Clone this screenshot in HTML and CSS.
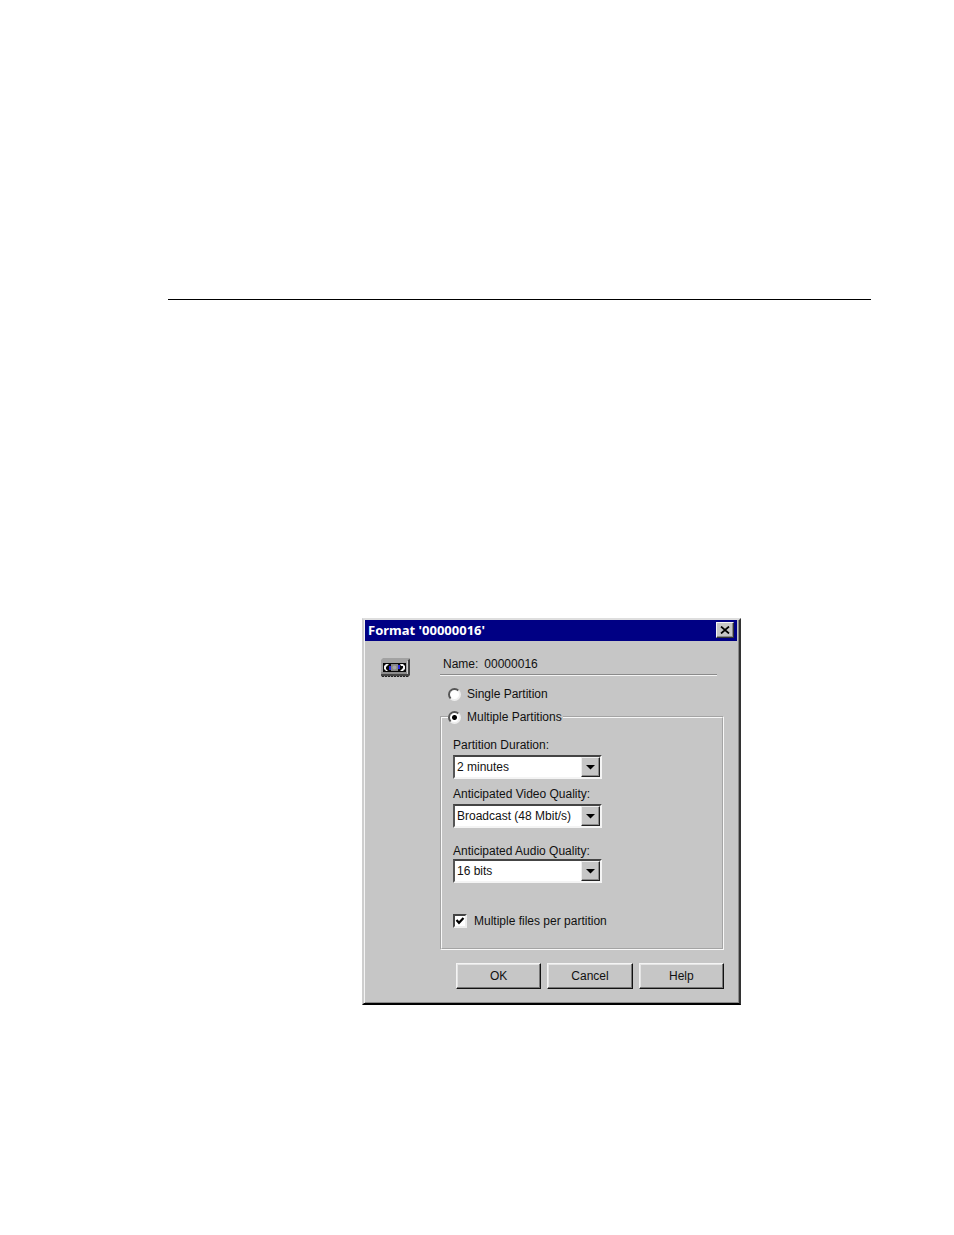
FILE: index.html
```html
<!DOCTYPE html>
<html lang="en">
<head>
<meta charset="utf-8">
<title>Format '00000016'</title>
<link rel="stylesheet" href="styles.css">
</head>
<body>
<main class="page">
  <hr class="page-rule">
  <form class="dialog" role="dialog" aria-labelledby="dialog-title">
    <header class="titlebar">
      <h1 class="title" id="dialog-title">Format '00000016'</h1>
      <button class="close" type="button" aria-label="Close">
        <svg width="10" height="8" viewBox="0 0 10 8" aria-hidden="true"><path d="M1 0.5L9 7.5M9 0.5L1 7.5" stroke="#000" stroke-width="1.7"/></svg>
      </button>
    </header>
    <div class="body">
      <svg class="cassette" width="30" height="20" viewBox="0 0 30 20" aria-hidden="true">
        <path d="M0 2L2 0H29V17L27 19H0Z" fill="#a2a2a2"/>
        <path d="M27 2L29 1V17L27 19Z" fill="#444"/>
        <path d="M26 3h1v14h-1z" fill="#ccc"/>
        <path d="M0 16h27v2H0z" fill="#444"/>
        <path d="M1 18.5h26" stroke="#222" stroke-dasharray="2 1"/>
        <path d="M0 14h26v2H0z" fill="#8c8c8c"/>
        <path d="M2 5h23v9H2z" fill="#080808"/>
        <path d="M5 6h3L5 9v2l2 2H5L3 11V8zM22 6h-3l1 2h2v2l-3 3h3l2-2V8z" fill="#f4f4f4"/>
        <path d="M8 8h2v4H8zM17 7h2v4h-2z" fill="#2828e0"/>
        <path d="M10 6h7v7h-7z" fill="#858585"/>
        <circle cx="13.5" cy="9.5" r="2" fill="#a4a4a4"/>
      </svg>
      <div class="settings">
        <p class="name"><span>Name:</span><span>00000016</span></p>
        <label class="choice single"><input class="radio" type="radio" name="mode">Single Partition</label>
        <fieldset class="group">
          <legend class="legend"><label class="choice"><input class="radio" type="radio" name="mode" checked>Multiple Partitions</label></legend>
          <div class="field">
            <label for="duration">Partition Duration:</label>
            <span class="combo"><select id="duration"><option>2 minutes</option></select><svg class="arrow" viewBox="0 0 17 18" aria-hidden="true"><path d="M4 7h9L8.5 11.5z"/></svg></span>
          </div>
          <div class="field">
            <label for="video">Anticipated Video Quality:</label>
            <span class="combo"><select id="video"><option>Broadcast (48 Mbit/s)</option></select><svg class="arrow" viewBox="0 0 17 18" aria-hidden="true"><path d="M4 7h9L8.5 11.5z"/></svg></span>
          </div>
          <div class="field audio">
            <label for="audio">Anticipated Audio Quality:</label>
            <span class="combo"><select id="audio"><option>16 bits</option></select><svg class="arrow" viewBox="0 0 17 18" aria-hidden="true"><path d="M4 7h9L8.5 11.5z"/></svg></span>
          </div>
          <label class="check"><span class="checkwrap"><input type="checkbox" checked><svg class="tick" viewBox="0 0 10 10" aria-hidden="true"><path d="M1.5 4L4 6.8L8.5 2" fill="none" stroke="#000" stroke-width="2.2"/></svg></span>Multiple files per partition</label>
        </fieldset>
        <div class="actions">
          <button class="button" type="button">OK</button>
          <button class="button" type="button">Cancel</button>
          <button class="button" type="button">Help</button>
        </div>
      </div>
    </div>
  </form>
</main>
</body>
</html>
```
FILE: styles.css
```css
* { box-sizing: border-box; }

body {
  margin: 0;
  background: #fff;
  color: #111;
  font: 12px/16px "Liberation Sans", Arial, sans-serif;
}

button, select, input { font: inherit; color: inherit; margin: 0; }

.page { padding: 299px 83px 230px 168px; }

.page-rule {
  margin: 0 0 318px;
  border: 0;
  border-top: 1px solid #000;
}

.dialog {
  max-width: 379px;
  margin-left: 194px;
  background: #c6c6c6;
  border: 2px solid;
  border-color: #dedede #333 #000 #cecece;
  box-shadow: inset 1px 0 #f4f4f4, inset -1px -1px #8a8a8a;
}

.titlebar {
  display: flex;
  align-items: flex-start;
  justify-content: space-between;
  height: 21px;
  margin: 0 2px 0 1px;
  padding: 2px 3px 0;
  background: #000084;
}

.title {
  margin: 0;
  color: #fff;
  font: bold 13px/16px "Noto Sans", sans-serif;
}

.close {
  display: flex;
  align-items: center;
  justify-content: center;
  width: 18px;
  height: 16px;
  padding: 0;
  background: #c6c6c6;
  border: 1px solid;
  border-color: #f4f4f4 #333 #333 #f4f4f4;
  box-shadow: inset -1px -1px #8a8a8a;
}

.body {
  display: flex;
  align-items: flex-start;
  gap: 29px;
  padding: 15px 15px 14px 17px;
}

.cassette { flex: none; margin-top: 2px; }

.settings { flex: 1; min-width: 0; }

.name {
  display: flex;
  gap: 6px;
  margin: 0 7px 0 0;
  padding: 0 3px 2px;
  border-bottom: 1px solid #8a8a8a;
  box-shadow: 0 1px #f4f4f4;
}

.choice { display: flex; align-items: center; gap: 6px; }

.single { margin-top: 11px; padding-left: 8px; }

.radio {
  appearance: none;
  width: 13px;
  height: 13px;
  border: 2px solid;
  border-color: #555 #eee #eee #555;
  border-radius: 50%;
  background: #fff;
}

.radio:checked { background: radial-gradient(circle, #000 2px, #fff 3px); }

.group {
  min-width: 0;
  margin: 7px 0 0;
  padding: 12px 10px 19px 11px;
  border: 2px groove #f8f8f8;
}

.legend { margin-left: -5px; padding: 0 1px 0 0; }

.field { display: flex; flex-direction: column; width: 149px; margin-bottom: 7px; }

.field label { margin-bottom: 2px; white-space: nowrap; }

.audio { margin-top: 15px; }

.audio label { margin-bottom: 0; }

.combo { position: relative; display: block; }

.combo select {
  display: block;
  appearance: none;
  width: 100%;
  height: 24px;
  padding: 0 20px 0 2px;
  background: #fff;
  border: 2px solid;
  border-color: #444 #f4f4f4 #f4f4f4 #555;
  border-radius: 0;
}

.arrow {
  position: absolute;
  top: 2px;
  right: 2px;
  width: 19px;
  height: 20px;
  background: #c6c6c6;
  border: 1px solid;
  border-color: #eee #222 #222 #eee;
  box-shadow: inset -1px -1px #8a8a8a;
  pointer-events: none;
}

.check { display: flex; align-items: center; gap: 7px; margin-top: 30px; }

.checkwrap { position: relative; display: block; width: 14px; height: 14px; }

.check input {
  display: block;
  appearance: none;
  width: 14px;
  height: 14px;
  background: #fff;
  border: 2px solid;
  border-color: #444 #eee #eee #444;
}

.tick { position: absolute; inset: 2px; display: none; }

.check input:checked + .tick { display: block; }

.actions {
  display: flex;
  gap: 6px;
  margin: 13px 0 0 16px;
}

.button {
  flex: 1;
  height: 26px;
  padding: 0;
  background: #c6c6c6;
  border: 1px solid;
  border-color: #f4f4f4 #111 #111 #f4f4f4;
  box-shadow: inset -1px -1px #777, inset 1px 1px #e4e4e4;
}
```
